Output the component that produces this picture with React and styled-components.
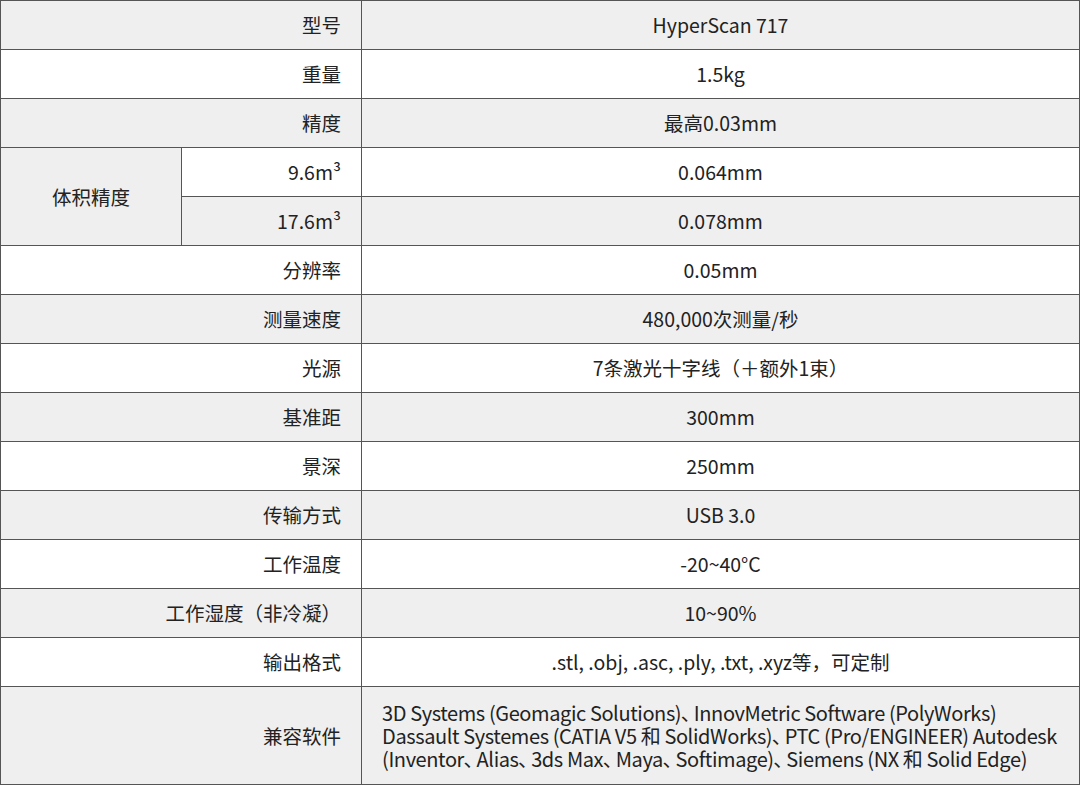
import React from 'react';
import styled, { createGlobalStyle } from 'styled-components';

const GlobalStyle = createGlobalStyle`
  html, body {
    margin: 0;
    padding: 0;
    background: #fff;
  }
  body {
    font-family: "Noto Sans CJK SC", "Noto Sans", sans-serif;
    color: #222;
  }
`;

const Table = styled.table`
  width: 1080px;
  border-collapse: collapse;
  table-layout: fixed;
  font-size: 19.5px;
`;

const Row = styled.tr`
  background: ${(p) => (p.$grey ? '#efefef' : '#ffffff')};
`;

const Cell = styled.td`
  border: 1px solid #555;
  height: ${(p) => p.$h || 49}px;
  padding: 0 20px;
  box-sizing: border-box;
  text-align: ${(p) => p.$align || 'center'};
  vertical-align: middle;
  white-space: nowrap;
  line-height: 1;
  background: ${(p) => (p.$bg ? p.$bg : 'inherit')};
`;

const LabelCell = styled(Cell)`
  text-align: right;
  padding-right: 20px;
`;

const SoftwareText = styled.div`
  text-align: left;
  font-size: 20px;
  line-height: 23px;
  white-space: nowrap;
  letter-spacing: -0.4px;
`;

const Comma = styled.span`
  margin-right: 3px;
`;

const rows = [
  ['型号', 'HyperScan 717'],
  ['重量', '1.5kg'],
  ['精度', '最高0.03mm'],
];

const rowsAfter = [
  ['分辨率', '0.05mm'],
  ['测量速度', '480,000次测量/秒'],
  ['光源', '7条激光十字线（＋额外1束）'],
  ['基准距', '300mm'],
  ['景深', '250mm'],
  ['传输方式', 'USB 3.0'],
  ['工作温度', '-20~40°C'],
  ['工作湿度（非冷凝）', '10~90%'],
  ['输出格式', '.stl, .obj, .asc, .ply, .txt, .xyz等，可定制'],
];

const C = () => <Comma>､</Comma>;

export default function App() {
  return (
    <>
      <GlobalStyle />
      <Table>
        <colgroup>
          <col style={{ width: 181 }} />
          <col style={{ width: 180 }} />
          <col />
        </colgroup>
        <tbody>
          {rows.map(([label, value], i) => (
            <Row key={label} $grey={i % 2 === 0}>
              <LabelCell colSpan={2}>{label}</LabelCell>
              <Cell>{value}</Cell>
            </Row>
          ))}
          <Row>
            <Cell rowSpan={2} $bg="#efefef">体积精度</Cell>
            <LabelCell>9.6m³</LabelCell>
            <Cell>0.064mm</Cell>
          </Row>
          <Row $grey>
            <LabelCell>17.6m³</LabelCell>
            <Cell>0.078mm</Cell>
          </Row>
          {rowsAfter.map(([label, value], i) => (
            <Row key={label} $grey={i % 2 === 1}>
              <LabelCell colSpan={2}>{label}</LabelCell>
              <Cell>{value}</Cell>
            </Row>
          ))}
          <Row $grey>
            <LabelCell colSpan={2} $h={98}>兼容软件</LabelCell>
            <Cell $align="left" $h={98}>
              <SoftwareText>
                3D Systems (Geomagic Solutions)<C />InnovMetric Software (PolyWorks)
                <br />
                Dassault Systemes (CATIA V5 和 SolidWorks)<C />PTC (Pro/ENGINEER) Autodesk
                <br />
                (Inventor<C />Alias<C />3ds Max<C />Maya<C />Softimage)<C />Siemens (NX 和 Solid Edge)
              </SoftwareText>
            </Cell>
          </Row>
        </tbody>
      </Table>
    </>
  );
}
